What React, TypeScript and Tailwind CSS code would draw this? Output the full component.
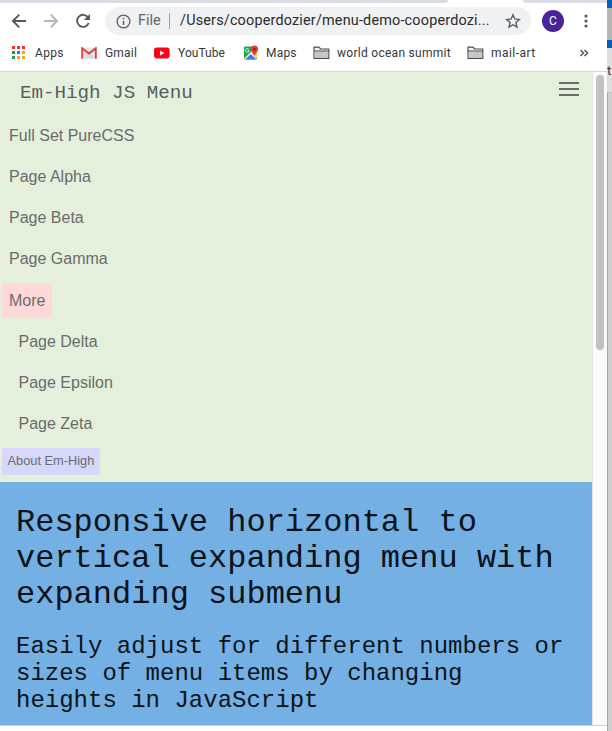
import React from 'react';

const ui = "font-['Roboto','Liberation_Sans',sans-serif]";

function Folder() {
  return (
    <svg width="17" height="14" viewBox="0 0 17 14" className="shrink-0">
      <path d="M1 12.3V1.2h5l1.600 1.800h8.200v9.300z" fill="#f4f4f4" stroke="#4b4b4b" strokeWidth="1.200" strokeLinejoin="round" />
      <path d="M1.600 5.500h13.600v6.200H1.600z" fill="#c6c6c6" />
      <path d="M1 5h14.800" stroke="#4b4b4b" strokeWidth="1" />
    </svg>
  );
}

function AppsIcon() {
  const colors = ['#f92f2f', '#ff2d2d', '#f92f2f', '#1e9c50', '#1a86e8', '#faa21b', '#1e9c50', '#faa21b', '#faa21b'];
  return (
    <svg width="13" height="13" viewBox="0 0 13 13" className="shrink-0">
      {colors.map((c, i) => (
        <rect key={i} x={(i % 3) * 5} y={Math.floor(i / 3) * 5} width="3" height="3" fill={c} />
      ))}
    </svg>
  );
}

function Gmail() {
  return (
    <svg width="16" height="12" viewBox="0 0 16 12" className="shrink-0">
      <rect x="1" y="0.5" width="14" height="11" fill="#e9e9e9" />
      <path d="M2 11.5 6 6l2 1.6L10 6l4 5.5z" fill="#d9d9d9" />
      <path d="M1.2 11.8V1.2L8 6.6l6.8-5.4v10.6" fill="none" stroke="#dd4339" strokeWidth="1.900" />
    </svg>
  );
}

function YouTube() {
  return (
    <svg width="16" height="12" viewBox="0 0 16 12" className="shrink-0">
      <rect y="0.4" width="15.6" height="11" rx="2.8" fill="#ff0014" />
      <path d="M6 3.5v5L10.3 6z" fill="#fff" />
    </svg>
  );
}

function Maps() {
  return (
    <svg width="16" height="15" viewBox="0 0 16 15" className="shrink-0">
      <rect x="1" y="1.5" width="13" height="13" rx="1" fill="#1fa15a" />
      <path d="M1 13.5 11.5 3l2.500 2v8z" fill="#fdd04a" />
      <path d="m1 14 7-6.500 6 7H1.600z" fill="#e9e9e9" />
      <path d="M2 14.500 7.800 9.200l5.700 5.300z" fill="#2f7df6" />
      <path d="M5.900 4.300a1.900 1.900 0 1 0 .3 1.300H4.400" fill="none" stroke="#eef8f0" strokeWidth="0.9" />
      <path d="M11.500 11.500C11.300 8.500 8 7.200 8 4.200a3.500 3.700 0 0 1 7 0c0 3-3.300 4.300-3.500 7.300z" fill="#e83a32" />
      <circle cx="11.500" cy="4.200" r="1.300" fill="#8d1d1d" />
    </svg>
  );
}

function Toolbar() {
  return (
    <div className="flex h-[34px] items-center pt-1 pb-0.5">
      <svg width="105" height="28" viewBox="0 0 105 28" className="shrink-0" fill="none" strokeWidth="1.900">
        <path d="M26 14H13M19.300 7.600 12.900 14l6.400 6.400" stroke="#54575b" />
        <path d="M44 14h13M50.700 7.600 57.100 14l-6.400 6.400" stroke="#b4b6b9" />
        <path d="M88.100 10.500A6 6 0 1 0 88.700 16" stroke="#54575b" />
        <path d="M89.900 7v6h-6z" fill="#54575b" />
      </svg>
      <div className="flex h-7 w-[426px] shrink-0 items-center rounded-full bg-[#f0f1f2]">
        <svg width="15" height="15" viewBox="0 0 15 15" className="ml-[10.500px] shrink-0">
          <circle cx="7.500" cy="7.500" r="6.400" fill="none" stroke="#5b5e62" strokeWidth="1.300" />
          <path d="M7.500 6.700v4.300M7.500 3.800v1.500" stroke="#5b5e62" strokeWidth="1.500" />
        </svg>
        <span className="ml-[7.500px] w-[24px] shrink-0 text-[14.400px] leading-7 text-[#63666a]">File</span>
        <span className="ml-[7px] h-4 w-px shrink-0 bg-[#9a9c9f]" />
        <span className="ml-[10px] w-[316px] shrink-0 whitespace-nowrap text-[14.400px] leading-7 tracking-[0.190px] text-[#2a2b2e]">/Users/cooperdozier/menu-demo-cooperdozi...</span>
        <svg width="16" height="16" viewBox="0 0 16 16" className="ml-[9px] shrink-0">
          <path d="m8 1.700 1.800 4.300 4.700.4-3.600 3.100 1.100 4.600L8 11.700l-4 2.400 1.100-4.600L1.500 6.400l4.700-.4z" fill="none" stroke="#55585c" strokeWidth="1.300" />
        </svg>
      </div>
      <div className="ml-[11px] flex size-[22px] items-center justify-center rounded-full bg-[#482499] text-[12px] text-white">C</div>
      <svg width="4" height="14" viewBox="0 0 4 14" className="ml-[19.500px]" fill="#53565a">
        <circle cx="2" cy="2" r="1.600" /><circle cx="2" cy="7" r="1.600" /><circle cx="2" cy="12" r="1.600" />
      </svg>
    </div>
  );
}

function Bookmarks() {
  return (
    <div className="flex h-[34px] items-center whitespace-nowrap pb-[3px] pl-3 text-[12px] text-[#35373a]">
      <div className="flex w-[69px] items-center gap-[10px]"><AppsIcon /><span className="pt-px tracking-[0.350px]">Apps</span></div>
      <div className="flex w-[73px] items-center gap-2"><Gmail /><span className="pt-px tracking-[0.200px]">Gmail</span></div>
      <div className="flex w-[89px] items-center gap-2"><YouTube /><span className="pt-px tracking-[0.050px]">YouTube</span></div>
      <div className="flex w-[70px] items-center gap-[7px]"><Maps /><span className="pt-px tracking-[0.200px]">Maps</span></div>
      <div className="flex w-[154px] items-center gap-[7px]"><Folder /><span className="pt-px tracking-[0.280px]">world ocean summit</span></div>
      <div className="flex w-[112px] items-center gap-[7px]"><Folder /><span className="pt-px tracking-[0.450px]">mail-art</span></div>
      <svg width="10" height="8" viewBox="0 0 10 8" fill="none" stroke="#55585c" strokeWidth="1.500">
        <path d="m1.500 1 3 3-3 3M5.500 1l3 3-3 3" />
      </svg>
    </div>
  );
}

const link = 'flex h-[41.200px] items-center';

function Menu() {
  return (
    <nav className="h-[410px] bg-[#e4f0dc] font-['Liberation_Sans',Arial,sans-serif] text-[16px] text-[#6b6b6b]">
      <div className="flex h-[43px] items-center justify-between pl-5 pr-[13px]">
        <span className="font-['Liberation_Mono',monospace] text-[19.200px] text-[#555f63]">Em-High JS Menu</span>
        <div className="mb-[9px] flex w-5 flex-col gap-1">
          <span className="h-[2px] bg-[#6b6b6b]" />
          <span className="h-[2px] bg-[#6b6b6b]" />
          <span className="h-[2px] bg-[#6b6b6b]" />
        </div>
      </div>
      <div className={link + ' pl-[9px]'}>Full Set PureCSS</div>
      <div className={link + ' pl-[9px]'}>Page Alpha</div>
      <div className={link + ' pl-[9px]'}>Page Beta</div>
      <div className={link + ' pl-[9px]'}>Page Gamma</div>
      <div className={link + ' pl-[2px]'}><span className="flex h-[35px] w-[50px] items-center bg-[#ffd8d9] pl-[7px] pt-px">More</span></div>
      <div className={link + ' pl-[18.500px]'}>Page Delta</div>
      <div className={link + ' pl-[18.500px]'}>Page Epsilon</div>
      <div className={link + ' pl-[18.500px]'}>Page Zeta</div>
      <div className="ml-[2px] mt-[3px] flex h-[27px] w-[98px] items-center bg-[#d7d7fb] pl-[5.500px] text-[12.800px]">About Em-High</div>
    </nav>
  );
}

function Hero() {
  return (
    <main className="h-[243px] whitespace-nowrap bg-[#74b0e4] pl-4 pt-[22.500px] font-['Liberation_Mono',monospace] text-[#0b1218]">
      <h1 className="text-[32px] leading-[36px]">Responsive horizontal to<br />vertical expanding menu with<br />expanding submenu</h1>
      <h2 className="mt-[20.500px] text-[24px] leading-[27px]">Easily adjust for different numbers or<br />sizes of menu items by changing<br />heights in JavaScript</h2>
    </main>
  );
}

export default function App() {
  return (
    <div className={'flex h-[731px] w-[612px] overflow-hidden bg-white ' + ui}>
      <div className="flex w-[607px] shrink-0 flex-col">
        <div className="flex h-[3px] justify-between">
          <span className="w-[448px] rounded-br-[3px] bg-[#d9dce2]" />
          <span className="w-[84px] rounded-bl-[3px] bg-[#d9dce2]" />
        </div>
        <Toolbar />
        <Bookmarks />
        <div className="h-px bg-[#d8d8d8]" />
        <div className="flex h-[653px]">
          <div className="w-[592px]"><Menu /><Hero /></div>
          <div className="flex w-[15px] justify-center border-l border-[#e6e6e6] bg-[#fafafa] pt-[3px]">
            <span className="h-[275px] w-2 rounded-full bg-[#c1c1c1]" />
          </div>
        </div>
        <div className="h-px bg-[#d0d0d0]" />
        <div className="h-[5px] bg-white" />
      </div>
      <div className="flex w-[5px] shrink-0 flex-col overflow-hidden">
        <span className="h-2 bg-[#0860b3]" />
        <span className="h-8 bg-[#b9b7b5]" />
        <span className="h-2 bg-[#0860b3]" />
        <span className="h-[45px] border-b border-[#c4c4c4] bg-[#dedede] pt-[13px] text-[13px] leading-[19px] text-[#333]">t</span>
        <span className="flex-1 border-l border-[#a6a6a6] bg-[#cfcfcf]" />
      </div>
    </div>
  );
}
